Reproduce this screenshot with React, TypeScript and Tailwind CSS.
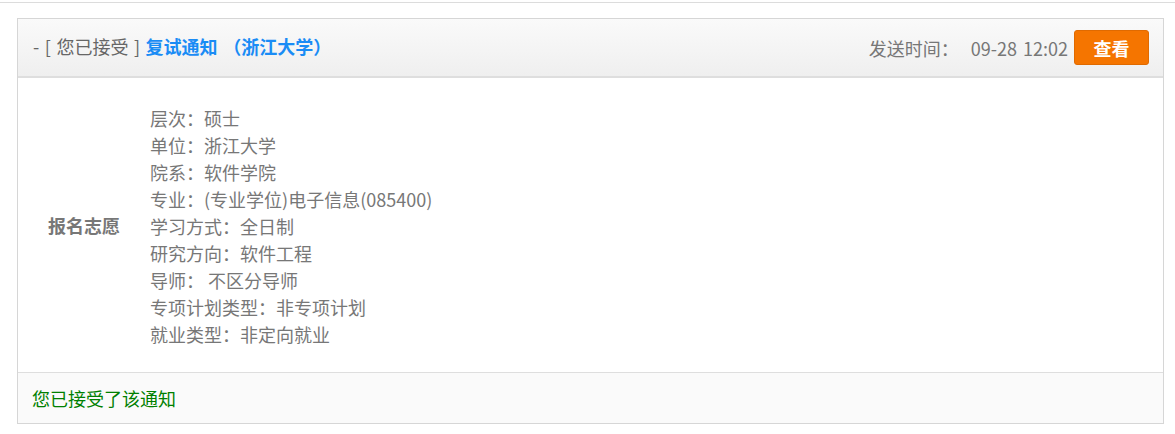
import React from "react";

const lines = [
  "层次：硕士",
  "单位：浙江大学",
  "院系：软件学院",
  "专业：(专业学位)电子信息(085400)",
  "学习方式：全日制",
  "研究方向：软件工程",
  "导师： 不区分导师",
  "专项计划类型：非专项计划",
  "就业类型：非定向就业",
];

export default function App() {
  return (
    <div
      className="w-[1175px] h-[434px] bg-white overflow-hidden"
      style={{ fontFamily: '"Noto Sans CJK SC", "Noto Sans", sans-serif' }}
    >
      <div className="pt-[2px]">
        <div className="h-px bg-[#dcdcdc]" />
      </div>
      <div className="mt-[15px] ml-[17px] w-[1147px] border border-[#d6d6d6]">
        <div className="h-[59px] border-b-2 border-[#dedede] bg-gradient-to-b from-[#fafafa] to-[#efefef] flex items-center justify-between pl-[15px] pr-[14px]">
          <div className="text-[18px] leading-[24px] whitespace-pre pb-[3px] [word-spacing:1.5px]">
            <span className="text-[#666]">- [ 您已接受 ] </span>
            <span className="text-[#1a8cf5] font-bold">复试通知 （浙江大学）</span>
          </div>
          <div className="flex items-center">
            <span className="text-[18px] leading-[24px] text-[#777] whitespace-pre [word-spacing:2px]">发送时间：  09-28 12:02</span>
            <button className="ml-[6px] w-[75px] h-[35px] rounded-[3px] bg-[#f57500] border border-[#e06a00] text-white font-bold text-[18px] leading-[24px] flex items-center justify-center">
              查看
            </button>
          </div>
        </div>
        <div className="flex bg-white">
          <div className="w-[132px] flex items-center justify-center text-[18px] font-bold text-[#777]">
            报名志愿
          </div>
          <div className="pt-[27px] pb-[24px] text-[18px] leading-[27px] text-[#777] whitespace-pre">
            {lines.map((l) => (
              <div key={l}>{l}</div>
            ))}
          </div>
        </div>
        <div className="h-[51px] border-t border-[#dedede] bg-[#fafafa] flex items-center pl-[14px] text-[18px] text-[#008000]">
          您已接受了该通知
        </div>
      </div>
    </div>
  );
}
